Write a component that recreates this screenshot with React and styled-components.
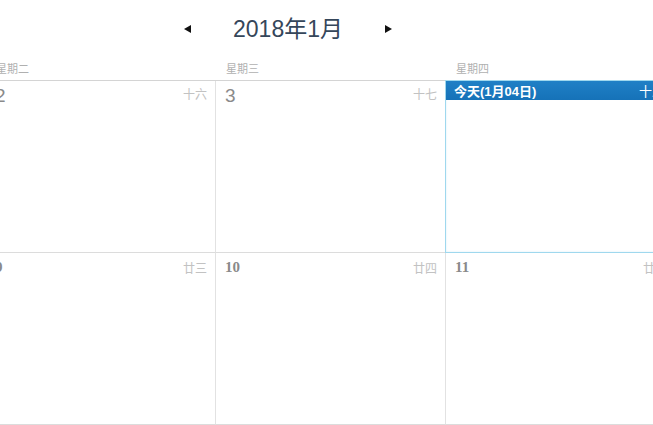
import React from 'react';
import styled, { createGlobalStyle } from 'styled-components';

const GlobalStyle = createGlobalStyle`
  body {
    margin: 0;
    background: #fff;
    font-family: "Liberation Sans", "Noto Sans CJK SC", sans-serif;
  }
`;

const Page = styled.div`
  width: 653px;
  height: 425px;
  overflow: hidden;
`;

const Header = styled.div`
  display: flex;
  align-items: center;
  justify-content: center;
  gap: 42px;
  height: 58px;
  padding-right: 77px;
`;

const Arrow = styled.svg`
  width: 7px;
  height: 8px;
  display: block;
`;

const Title = styled.div`
  font-family: "Liberation Sans", "Noto Sans CJK SC", sans-serif;
  font-size: 23px;
  color: #35465a;
  line-height: 28px;
`;

const Calendar = styled.div`
  margin-left: -14px;
  width: 690px;
`;

const Weekdays = styled.div`
  display: grid;
  grid-template-columns: repeat(3, 230px);
  height: 22px;
`;

const Weekday = styled.div`
  padding: 3px 0 0 10px;
  font-size: 11px;
  line-height: 14px;
  color: #b0b0b0;
  font-family: "Noto Sans CJK SC", sans-serif;
`;

const Grid = styled.div`
  display: grid;
  grid-template-columns: repeat(3, 230px);
  grid-auto-rows: 172px;
  border-top: 1px solid #d4d4d4;
`;

const Cell = styled.div`
  display: flex;
  flex-direction: column;
  border-right: 1px solid #e2e2e2;
  border-bottom: 1px solid #dcdcdc;
  ${p => p.$today && `
    border: 1px solid #9fd8ee;
    margin: -1px 0 0 -1px;
    box-shadow: inset 0 0 2px rgba(120, 200, 235, 0.35);
  `}
`;

const CellHead = styled.div`
  display: flex;
  justify-content: space-between;
  align-items: flex-start;
  padding: ${p => (p.$row2 ? '7px 8px 0 9px' : '5px 8px 0 9px')};
`;

const DayNum = styled.span`
  font-family: ${p => (p.$serif ? '"Liberation Serif", serif' : '"Liberation Sans", sans-serif')};
  font-size: ${p => (p.$serif ? '15px' : '19px')};
  font-weight: ${p => (p.$serif ? 700 : 400)};
  line-height: ${p => (p.$serif ? '15px' : '19px')};
  color: ${p => (p.$serif ? '#8a8a8a' : '#8a8a8a')};
`;

const Lunar = styled.span`
  font-family: "Noto Sans CJK SC", sans-serif;
  font-size: 12px;
  line-height: 14px;
  color: #c2c2c2;
  padding-top: 1px;
`;

const TodayBar = styled.div`
  display: flex;
  justify-content: space-between;
  align-items: center;
  height: 19px;
  padding: 0 10px 0 8px;
  background: linear-gradient(#1f80c6, #1672b8);
  color: #fff;
  font-size: 13px;
  font-weight: 700;
  font-family: "Liberation Sans", "Noto Sans CJK SC", sans-serif;
`;

const TodayLunar = styled.span`
  font-weight: 400;
  font-family: "Noto Sans CJK SC", sans-serif;
`;

const weekdays = ['星期二', '星期三', '星期四'];

const rows = [
  [
    { day: '2', lunar: '十六' },
    { day: '3', lunar: '十七' },
    { today: true, label: '今天(1月04日)', lunar: '十八' },
  ],
  [
    { day: '9', lunar: '廿三' },
    { day: '10', lunar: '廿四' },
    { day: '11', lunar: '廿五' },
  ],
];

function App() {
  return (
    <Page>
      <GlobalStyle />
      <Header>
        <Arrow viewBox="0 0 7 8"><path d="M7 0 L0 4 L7 8 Z" fill="#111" /></Arrow>
        <Title>2018年1月</Title>
        <Arrow viewBox="0 0 7 8"><path d="M0 0 L7 4 L0 8 Z" fill="#111" /></Arrow>
      </Header>
      <Calendar>
        <Weekdays>
          {weekdays.map(w => <Weekday key={w}>{w}</Weekday>)}
        </Weekdays>
        <Grid>
          {rows.map((row, r) => row.map((c, i) => (
            <Cell key={r + '-' + i} $today={c.today}>
              {c.today ? (
                <TodayBar>
                  <span>{c.label}</span>
                  <TodayLunar>{c.lunar}</TodayLunar>
                </TodayBar>
              ) : (
                <CellHead $row2={r === 1}>
                  <DayNum $serif={r === 1}>{c.day}</DayNum>
                  <Lunar>{c.lunar}</Lunar>
                </CellHead>
              )}
            </Cell>
          )))}
        </Grid>
      </Calendar>
    </Page>
  );
}

export default App;
